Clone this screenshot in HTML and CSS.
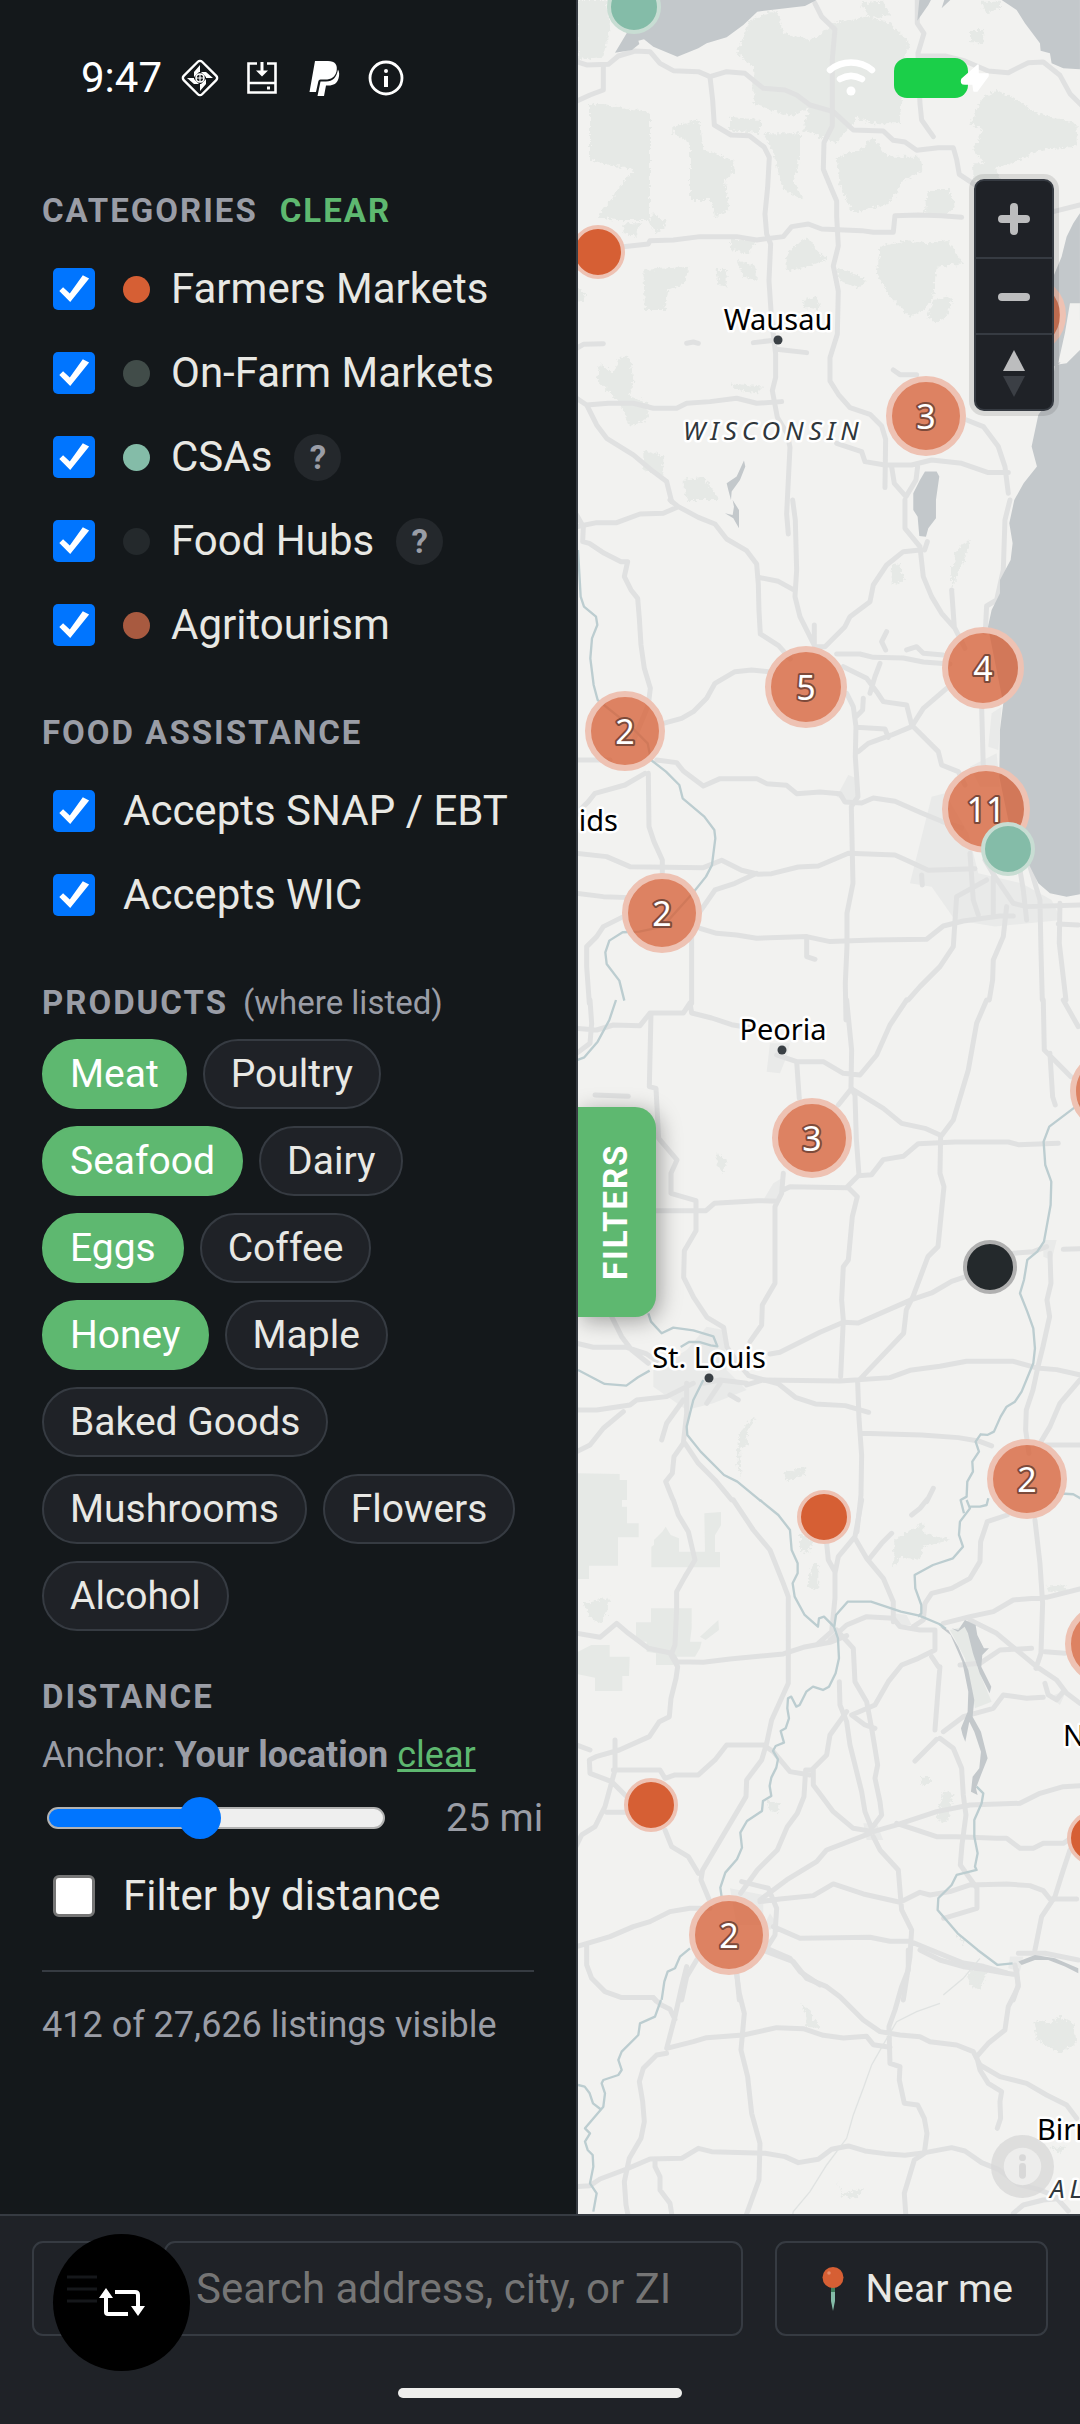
FILE: index.html
```html
<!DOCTYPE html>
<html lang="en">
<head>
    <meta charset="UTF-8">
    <meta name="viewport" content="width=device-width, initial-scale=1.0">
    <title>Farm Map</title>
    <link rel="stylesheet" href="styles.css">
</head>
<body>
    <div class="status-bar">
        <div class="status-left">
            <span class="clock">9:47</span>
            <svg class="status-icon" viewBox="0 0 40 40">
                <rect x="7" y="7" width="26" height="26" rx="3" transform="rotate(45 20 20)" fill="none" stroke="#fff" stroke-width="2.4"/>
                <path d="M20 7v7h-6zM20 33v-7h6zM7 20h7v6zM33 20h-7v-6zM14 14h5l-5 5zM26 14v5l-5-5zM26 26h-5l5-5zM14 26v-5l5 5z" fill="#fff"/>
                <circle cx="20" cy="20" r="4" fill="none" stroke="#fff" stroke-width="1.6"/>
                <path d="M20 16v8M16 20h8" stroke="#fff" stroke-width="1.2"/>
            </svg>
            <svg class="status-icon" viewBox="0 0 40 40">
                <path d="M15 5.500H6.500V34.500H33.500V5.500H25M6.500 25H33.500" fill="none" stroke="#fff" stroke-width="2.6"/>
                <path d="M20 4v10" stroke="#fff" stroke-width="3"/>
                <path d="M14 12.500h12l-6 6z" fill="#fff"/>
                <rect x="25" y="28.500" width="3" height="3" fill="#fff"/>
            </svg>
            <svg class="status-icon" viewBox="0 0 40 40">
                <path d="M11 3h13c7 0 10 4 8.500 10.500C31 19 27.500 21.500 21 21.500h-4.500c-1.500 0-2 1-2.300 2.500L12 34H5.500z" fill="#fff"/>
                <path d="M34 11.500c1.500 2.500 1.500 5.500.5 9-1.500 5-5 7-10 7h-2.500L20 38h-6.500l3-14.500h5.500c7 0 10.500-4 12-12z" fill="#fff"/>
            </svg>
            <svg class="status-icon" viewBox="0 0 40 40">
                <circle cx="20" cy="20" r="16" fill="none" stroke="#fff" stroke-width="2.800"/>
                <circle cx="20" cy="13" r="2" fill="#fff"/>
                <path d="M20 18v11" stroke="#fff" stroke-width="4"/>
            </svg>
        </div>
        <div class="status-right">
            <svg class="wifi" viewBox="0 0 50 38" fill="none" stroke="#fff" stroke-linecap="round">
                <path d="M4 11c12-10 30-10 42 0" stroke-width="6.500"/>
                <path d="M14 20c7-4 15-4 22 0" stroke-width="6.500"/>
                <circle cx="25" cy="32" r="4.500" fill="#fff" stroke="none"/>
            </svg>
            <svg class="battery" viewBox="0 0 96 40">
                <rect width="74" height="40" rx="13" fill="#1bcf49"/>
                <path d="M84 7L68 21q-2 5 3 5h8l1 7h3L94 18v-2H84z" fill="#fff" stroke="#fff" stroke-width="1.500" stroke-linejoin="round"/>
            </svg>
        </div>
    </div>

    <main class="content">
        <aside class="panel">
            <section class="panel-section">
                <h2>Categories <button type="button" class="clear-btn">Clear</button></h2>
                <label class="check-row"><input type="checkbox" checked><span class="swatch farmers"></span>Farmers Markets</label>
                <label class="check-row"><input type="checkbox" checked><span class="swatch onfarm"></span>On-Farm Markets</label>
                <div class="check-row">
                    <label class="check-row"><input type="checkbox" checked><span class="swatch csa"></span>CSAs</label>
                    <button type="button" class="help-btn">?</button>
                </div>
                <div class="check-row">
                    <label class="check-row"><input type="checkbox" checked><span class="swatch hub"></span>Food Hubs</label>
                    <button type="button" class="help-btn">?</button>
                </div>
                <label class="check-row"><input type="checkbox" checked><span class="swatch agri"></span>Agritourism</label>
            </section>

            <section class="panel-section">
                <h2>Food Assistance</h2>
                <label class="check-row"><input type="checkbox" checked>Accepts SNAP / EBT</label>
                <label class="check-row"><input type="checkbox" checked>Accepts WIC</label>
            </section>

            <section class="panel-section">
                <h2>Products <span class="hint">(where listed)</span></h2>
                <div class="chips">
                    <button type="button" class="chip active">Meat</button>
                    <button type="button" class="chip">Poultry</button>
                    <button type="button" class="chip active">Seafood</button>
                    <button type="button" class="chip">Dairy</button>
                    <button type="button" class="chip active">Eggs</button>
                    <button type="button" class="chip">Coffee</button>
                    <button type="button" class="chip active">Honey</button>
                    <button type="button" class="chip">Maple</button>
                    <button type="button" class="chip">Baked Goods</button>
                    <button type="button" class="chip">Mushrooms</button>
                    <button type="button" class="chip">Flowers</button>
                    <button type="button" class="chip">Alcohol</button>
                </div>
            </section>

            <section class="panel-section">
                <h2>Distance</h2>
                <p class="anchor">Anchor: <strong>Your location</strong> <a href="#">clear</a></p>
                <div class="range-row">
                    <input type="range" id="distance" min="5" max="50" value="25" aria-label="Distance">
                    <output for="distance">25 mi</output>
                </div>
                <label class="check-row"><input type="checkbox">Filter by distance</label>
            </section>

            <p class="count">412 of 27,626 listings visible</p>
        </aside>

        <div class="map">
            <svg class="map-canvas" viewBox="0 0 502 2214" preserveAspectRatio="xMinYMin slice">
                <defs>
                    <filter id="rough" x="-5%" y="-5%" width="110%" height="110%">
                        <feTurbulence type="fractalNoise" baseFrequency="0.09" numOctaves="3" seed="4"/>
                        <feDisplacementMap in="SourceGraphic" scale="22" xChannelSelector="R" yChannelSelector="G"/>
                    </filter>
                </defs>
                <rect width="502" height="2214" fill="#f2f2f0"/>

                <!-- northern tile -->
                <g transform="translate(-8 0) scale(.3333)">
                    <g class="wood" filter="url(#rough)">
                        <path d="M20 0h90l10 80-20 90-75 10zM540 60l80-30 20 70 90 20 60-50 100-20 70 20 60 60-20 50-10 190-90 0-40-20-60 80-100-40 20-70-60 30-110-40 0-110-50-40z"/>
                        <path d="M60 310l150 20 30 10 0 320-100 0-60-10 50-60 60-80-130-30 0-100zM310 380l80-20 10 90 90 30 0 40-25 20 10 90-40 20-10-50-65 0 0-170-50-30zM580 400l110 0 0 80-20 60 30 60-60-30-30-110zM480 350l90 10 0 40-90-10zM250 640l40 30-30 30-25-30z"/>
                        <path d="M800 470l70-20 40-40 40 60 100 0 10 40-60 30-40 70-110 30-40-80zM1070 570l70 0 15 50-30 30-60-10zM1240 290l40-20 60 30 60 40 120 30 0 70-110 10-60 30-90 30-50-60 30-60-40-20zM1200 90h40v40h-40zM870 10l70-5 20 40-60 10zM1230 5h60v20l-40 15z"/>
                        <path d="M220 810l135-10-10 50-50 20-10 60-60 0zM650 760l60-50 30 40 30 30-60 20-60 10zM800 800l90 40-20 25-60-20zM930 740l80-20 60 10 60-10 50 70-80 10-10 90-30 40-40 20-60-60-40-70 10-60zM480 720l80 0-20 40-60-10zM500 780l60 20v40l-40-10zM440 810h30v50l-25-5zM700 900l40-10 10 40-50-10zM1090 900l60-10-20 60-30 20-30-20z"/>
                        <path d="M90 1090l40 30 20-50 30 0 10 70-10 50 60 20-10 50-50 20-30-70-70-70zM480 1150l100 10-20 20-60-10zM220 1350l60 20 0 60-60-20zM340 1440l60-10 50 70-100 0zM160 670l50 0-10 40-40-10zM1210 490l60 0 20 50-80 0zM20 860l25 20-10 30-15-10z"/>
                    </g>
                    <g class="road">
                        <path d="M20 185l30 10 65-2 30-25 50-15 45 2 30 35 40 22 75 3 35 15 50-15 55 5 55 45 65 5 35 15 40 30 70 20 60 55 90 3 30 28 35 5 35 25 65-8 45 0 10 35 8 45 60 40 25 15"/>
                        <path d="M735 10l20 40 40 38-8 90 0 200-25 50-2 80 25 60 15 35 0 45 5 90-15 60 15 75-3 130-22 70 0 70 25 40 35 40 60 20 35 35 12 40-2 145"/>
                        <path d="M1042 0l0 70 20 30-18 60 6 150 5 50 35 50M1045 168l80 0 60 15 70 30 60 5 60-30 45-2 50 40 30 55 40 40"/>
                        <path d="M420 230l8 70 5 75 50 30 55 2 45 35 15 30-5 90-8 80 5 60 12 30-5 110 8 120 12 100 0 70-10 40 15 80 30 50 8 40-10 200 5 60"/>
                        <path d="M100 195l0 75-40 15-40 18M160 740l75-8 5-10 70-2 80-10 110 0 60 10 80-10 25-30 50-8 40 15 120 5 35 5 60 0 5-50 70-2 70 2 60 5M1450 635l80-20"/>
                        <path d="M20 1195l30 20 65-5 75 0 60 15 70 0 30-15 70-5 80-10 60 15 75-5M50 1215l30 60 30 40 80 50 60 50 40 30 15 60M800 1330l75 25 10 30 60 10 80 0 60-15 90 10 80 28 60 0M965 1400l8 50 35 40 30-50 5-40M1190 1260l50 20 45 60 20 60 10 80M20 1045l20-12 60-2M350 1030l20-4 15 4M550 1028l70-8M620 1048l90 10M970 1110l20 14 50 0"/>
                    </g>
                    <g class="water">
                        <path d="M150 0H740L705 18 562 35 520 75 470 112 410 130 385 145 322 170 250 140 222 118 205 122 208 132 186 150 135 158 170 100 140 40z"/>
                        <path d="M1295 0l45 30 25 40 45 60 2 22 28 8 5 30 35 15 50 3V0zM1048 0l-6 62 33-47 8-15zM1115 25l8-25h18z"/>
                        <path d="M1530 640l-20 30-20 40-15 60-25 60v270l20-10 20-60 25-70 15 0zM1530 1050l-40 40-35 5-15 100-35 50-20 95 16 60-40 50-28 50h200z"/>
                        <path d="M1065 1415h35l8 15-10 70h-68v-20l20-40zM522 1382l4 18-16 40-25 35-2 25-8-30-5-20 30-20z"/>
                    </g>
                    <path d="M1500 910l30 0v100l-35 70-30 8 20-90z" fill="#f2f2f0"/>
                </g>

                <!-- lake shore and Chicago -->
                <g transform="translate(-8 500) scale(.3333)">
                    <path class="urban" d="M1085 890l40-10 70 120 30 120 130 30 90 50 30 60-200 20-120-20-70-100-65-10zM800 890l35-65 25 10 0 70-30-5zM1265 640l30-20-10 130-30-10zM1200 800l80-40 10 100-60 0z"/>
                    <path class="wood" filter="url(#rough)" d="M965 200l20-10 20 50-40 15zM1180 130l20-10-10 40-30 70-10 0 5-70zM1140 200l20 0-10 70z"/>
                    <g class="road">
                        <path d="M20 80l60-12 60 0 70-26 70-2 45-20 60 32 50 20 35 45 60 35 30 40 5 60 2 80 4 70 55 35 35 40M300 0l25 20"/>
                        <path d="M20 45l20 35-2 45 20 5 45 30 50 25 20 0-10 45 20 40 20 25 5 60 5 80 10 70 18 60-6 50-50 120M280 670l55-15 35-20 40-40 25-45 60-35 50-5 50 5"/>
                        <path d="M668 0l8 60 4 150-5 80 15 60 45 90 30 0 60-60 15-30 60-45 10-50 40-60 50-40 50-5M565 232l60 12 45 25M733 375l0 60M1072 125l-8 25M1005 0l0 85 45 55 10 90 25 60 30 50 40 45 30 60M1145 270l8 110M1320 0l-15 60-5 150-20 90-30 18-4 80"/>
                        <path d="M800 462l70 0 40 10 90 2 60 12 80 6M820 500l70 35 30 40 20 30 70 10 15 60 80 80 10 40 50 20 20 40M1130 565l-70 60-35 55-60 25-70 25-30 25M830 580l20 40 8 60-2 90 8 120-20 30 5 230-18 90 0 100-5 110 2 110M860 682l85 5 10 25M880 595l-2 35-20 20M930 490l-15 40-15 50M950 395l-15 30 12 25M1010 450l30-10 20 20 60 5"/>
                        <path d="M20 780h100M260 780l60 8 20 25 60 45 50-22 110 0 30 15 60 5 30 25 70-5 60 5 15 25 50 3 35-15 65 10 80 35 60 25 60 20M235 820l2 160 15 45 25 55 0 50M225 820l-60 35-90 25-20 25-20 20"/>
                        <path d="M20 1060l90 10 70 30 220 3 55-22 60 30 50 12 40-2 80-20 60-3 90-38 140 5 40 18 60 28 140-5M20 1180l80 10 80 3M390 1235l45-65 60-20 65-30M390 1285l50 15 60 5 60 10 150-5 70 15 130-5 160-2 50-40 60-15 110-15 40 0M160 1250l-60 30-20 30-30 30 0 60 8 110M365 1310v200M710 1310l0 60 25 8M1055 1125l2 30"/>
                        <path d="M1235 620l5 180M1200 1060l10 140 15 45M1245 1080l30 50 55 80 40 10 160-5M1270 1130v110M1310 1220l-10 90-30 70-2 60-10 60M1350 1110l10 60 10 90M1380 1100l30 100 3 150 4 150M1470 1210l-2 120 20 170M1250 1140l-90 50-10 150-40 60-60 60-35 40M1465 1272l60 3"/>
                    </g>
                    <path class="river" d="M24 150l8 140 10 30 36 30 4 25-16 40-5 60 10 80 12 45 100 80 50 50 10 50 45 35 40 40 10 40 65 55 30 40 3 25-10 80-18 35-40 50-90 100-70 15-50 2-40 25-12 35 4 35 38 50 15 60"/>
                    <path class="water" d="M1333 0l-15 70 10 60-6 50-32 60v40l-25 50-11 50 46 230-10 80-2 140 52 250 35 10 30 60 35 30 50 10 40-7V0zM1030 0h68v55l-23 30-7 25-20-2-5-58-13-20zM488 0l19 30v55l-17-30-25-15 23 5 4-25z"/>
                </g>

                <!-- Peoria to St. Louis -->
                <g transform="translate(-8 1000) scale(.3333)">
                    <path class="urban" d="M600 130l60 0-10 40-20 50-40-5zM610 550l25-15-5 70-50-5zM250 1110l100-60 60-70 50 10 10 120 60 60-100 40-80 20-100-70zM1420 720l40 0-15 60-25-10z"/>
                    <path class="wood" filter="url(#rough)" d="M440 460l30 20-10 40-20-20zM540 1260l20-5-30 40 5 40-25 10 5 90-15-50 10-90zM640 1420l70-20-10 25-50 20z"/>
                    <path class="wood" d="M24 1420l125 2 0 18 22 0 0 60H24z"/>
                    <g class="road">
                        <path d="M60 0l5 70-5 60-40 30M20 85l60 5 50-15 80 2 30-38 100 0 20-30 5 30 60 15 60 20 60 10M243 40l-5 220 20 5 8 150 55 65-18 40 0 60 75 22 0 90-35 60-2 80 30 60 40 60 50 30 10 60 35 50 30 35 90 25 50 40 60 20 90 5 70 20"/>
                        <path d="M620 165l60 20 80 0 60 35 50 5 50-60 40-90 50-75M830 0l15 150-2 115 12 20 4 130 8 110-35 35 30 30-15 60-12 130-15 20-5 100 5 60-8 170M845 265l-40 50M850 270l90 55 55 45 70 15 45 20M680 185l8 110M640 520l-5 60-20 40 0 230-38 65-2 60-35 50M640 570l20-10 170 3M865 527l40-3 35-45 60-10 45-38 110-5 160 0 30 8 120-4M258 632h150l25-22 130-8 60 2"/>
                        <path d="M1250 0l-30 70-25 140-45 150-38 50-2 110 12 40-18 180-30 30-45 120-20 40-8 70-138 145 4 110 8 110-2 120-12 110M530 1155l50-15 230 3 150-10 60-22 90-12 80-15 140 0 70 20 60 5 90 20M600 1062l30-5 120-60 70-30 45 2 160-70 60-20 60-35 60-20M875 1300l180 5 110 8 60 10 40 15M1330 760l60-5 40-15M1480 748l60-2M1440 760l3 90-12 50 8 50-20 90-15 60-15 70-20 60-2 60 10 70"/>
                        <path d="M1420 0l3 150 80 80M1440 160l8 130 8 25M1480 0l45 80M1530 1140l-60 70-30 70-30 50M1410 1335h120M75 285l100 4"/>
                        <path d="M20 1030l50 12 100 0 60 20 30 20M125 950l30 60 30 40 50 40M20 1230l60 0 100-15 20-15 90-10 80-40M20 1355l40-20 40-50 60-50M340 1200l-50 70-15 50M350 1150l0 90-10 90-28 40-5 50-20 25 20 50M345 1330l40 60 50 50 50 60M400 1150l50-10 80 10M480 1185l25 15M410 1210l40-60M1090 1465l-20 40"/>
                    </g>
                    <g class="river">
                        <path d="M138 0l-20 60-35 65-40 47-20 8M235 940l8 25 32 35 35-17 60 8 60 18 12 30-20-3-35-10-30 0-25 15M24 1110l80 42 65 5 35-25 35-20M400 1140l-30 60-20 80 2 25 40 50 70 70 40 20 70 58"/>
                        <path d="M1530 310l-92 70-17 45 5 70 18 50-2 70-20 110-20 30-30 25-10 60-12 40 22 55 18 50 5 60-5 45-35 85-20 30-25 15-18 30-20 45-20 10-20-2-15 22 10 30-20 30 2 30-17 30-2 45-18 10 10 40M1460 1480l50 3 30 17"/>
                    </g>
                </g>

                <!-- Ozarks and Memphis -->
                <g transform="translate(-8 1500) scale(.3333)">
                    <path class="wood" d="M24 0h132v20h15v50h35v42h-62v85H57v40H24zM403 40l50-4v40l-18 30v50h15v46H244v-62l8-5v-15l25-25 10-15 15 25 25 10v40h78zM243 325h122v60l-5 40h35l-5 20-15 25h-64v25h-53v-35l-28-5v-30h-32v-58h45zM24 455l40-20h55v35h60l-2 58h-20v45H75v-40l-51-10zM390 410l55-50 2 30-40 30zM1140 390l60-15 25 70-10 40 50 120-50 20-30-150z"/>
                    <path class="wood" filter="url(#rough)" d="M40 310l80-20-10 50-20 30-30-20zM690 100l40 20-15 40-25-10zM730 190l15 10 0 70-35-10zM970 120l90-50 0 30 80 20-80 20-10 40-60-10-20 40zM590 900l40 10-10 30-25-10zM1120 870l30 15-20 85-30-10zM1190 1420l60-10-20 60-30-15zM1430 260l60-5-5 20-50 0zM1050 830l30 0 0 25-25 0zM1160 1300l25 20-5 15z"/>
                    <path class="urban" d="M480 1165l100 20v90h-80zM600 1240l20 30-20 20-15-20zM880 970l40 0 20 50-50 0zM970 340l40 5 15 30-50 0zM1440 590l50-20-20 45zM1320 1370l40 0-10 45-35-10z"/>
                    <g class="road">
                        <path d="M310 0l15 45 30 50 20 85-30 50-25 45 0 50-5 110-12 30 20 35-5 35-15 60-5 55-30 15-30 45-90 40-70 20-20 10 2 40 65 25 50 50M20 400l70 12 50-42 35 30 60 45 70 15 15 25 80 2 80-10 160-15 60-20 80-15 50-20M20 735l40 15M135 720l0 90-30 110-30 60-40 25-20 40M110 937h60M130 810h140l15 25 30-10 70 0 50-45 35-45 110 0 30 20 50 60 60 10"/>
                        <path d="M490 0l60 90 50 60 40 100 15 40 0 260-50 110-15 70-15 50-45 60-2 50-130 220-5 30 25 60M285 990l20 50 50 30 30 50M770 130l5 50 20 35 0 80-10 100-40 35M875 0l-20 110-50 60-10 50M855 115l35 60 50 60 30 70 0 60M1070 0l-20 25-25 20M965 100l-30 30-40 50M800 390l50 55 5 100 35 60 15 80 10 60 8 50-8 40 15 70 5 40-30 40-20-50-10-60-20-80-15-60-10-70-20-50-2-70"/>
                        <path d="M780 420l50-45 60-25 80 5 20 25 60 10 45 0 0 60-50 25-50 20-40 50-40 70-70 30 40 30 30 10M830 635l-50 70-10 60-45 45-18 0-5 80-20 50-30 40-30 70-60 60-50 70M730 810l0 45 60 80 60 50 60 10 70-20 120-40 100-20 150-5 60-30 70-20 90-5M980 970l120 40 60 0 120 5 30 0 40 30 40 0 30-15 60 0 30-20M1500 1050l-20 60-25 80-40 60-20 100M900 1000l-130 50-30 35-90 55-80 60"/>
                        <path d="M910 1010l20 40 55 60 10 120 30 60-5 80-20 130M570 1205l60-8 100-10 60-35 90 30 110 25 60-30 30 8 60-10 60-20 110-3 70 5 40 15 20 25 80 0M610 1280l80 35 210-3 60 12 60 0 60 25 100 40 60 10 70 20M515 1145l80 20 25 60-5 80-25 40 70 30 30 40 60 40M1030 380l30-20 5-50 20-30 60-15 55-30 30-50 2-60 20-60 60-20M1395 60l15 130 8 120-5 150-15 45M1120 370l80-20 70-15 60-35 100-8 100-25M1200 360l80 40 60 50 60 50 60 40 30 40 40 30M1170 495l60-5 60-40 95-5M1425 455l60 5M1110 500l-5 60-10 130M1085 470l20 30M1120 695l60-45 90-25 30-40 70 10 50-3M1110 715l40 30 25 60 5 80 8 60-12 90-5 60 50 70 0 60-100 30M1100 718l-65 65M1425 550l10 35 25 15 20-25"/>
                        <path d="M20 1340l100-30 70-30 50-15 60-30 60-10 60 0M50 1335l0 60 15 40 40 40 50 18 95 0 8 10M380 1380l-30 50-15 70M500 1420l8 80M1335 1395l10 60-15 45M1345 1360l80 0 100 20"/>
                    </g>
                    <g class="river">
                        <path d="M570 0l55 45 35 45 5 60 18 40 0 30-15 30 6 40 30 55 40 35 3-25 15-5 30 30 12 35 3 60-10 45-20 40-18 10-30-10-20 15-20 40-10 5-15-30-10 5-2 30 5 30-10 30-15 8 10 35-25 10-8 15 15 25-5 25-15 30-5 25 5 30-25 15-3 30-45 30-20 35 5 45-15 35-35 40-15 45 5 35M360 1345l-30 25-15 35-22 10-10 30-8 55"/>
                        <path d="M793 380l5-35 35-40 70 0 90 30 55 12 60 25 20 15M1190 0l10 25-30 40-3 40 12 35-30 35-60 20-55 30 2 40 18 50 0 25-10 10M1200 20l30 0 20-5 5-20"/>
                        <path d="M1220 860l20 20-5 30-22 50 0 50 10 50-8 40 5 10-60 15-15 30-40 40-2 35 60 70 60 50 60 45 45-5"/>
                    </g>
                    <path class="water" d="M1110 380l25 10 30 50 30 70 18 90-5 50 25 45 20 80-20 50-15 40 5 20-20-10 5-45 20-25 5-50-20-60-15-30-12 60-8-20-5-20 20-50 2-60-18-90-35-80zM1145 385l20 5 20-30 32 15 5 30 20 40 15 0-20 20-3 35 30 60-5 20-30-60-20-60-15-60-10-20-20 15zM1345 1385l50-20 60 10 70 30v15l-40-20-50-20-40 0-40 15z"/>
                </g>

                <!-- Mississippi and Alabama -->
                <g transform="translate(-8 1950) scale(.3333)">
                    <path class="wood" filter="url(#rough)" d="M690 160l30 20 10 30 25 25-50-5 5-30zM1390 210l50 10 30-20 40 20 10 60-50 30-70-40zM800 690l20 40 60-15-20 30-40-5zM1440 590l50 0-20 20zM1200 60l50 0-20 50z"/>
                    <g class="road">
                        <path d="M250 143l20 20 30 15 15 30 M350 50l-15 60-20 90-25 95 80-20 40-12 110-8 100-22 80 3 60 20 60 8 70-5 20 25 50 8M290 310l-30 5-40 40-12 40 10 60 5 60-10 50-35 60-15 70 5 70 10 50-20 40M20 710l40-3 30-20 80-30 70-30 95-2 50-30 40 10 160 5 60 10 40 18 60-10 40-30 50-10 50 15 60 8 60 5 60-8 80-15 40 10 50 35 50 20 60 45 60 15 50 20 40 45"/>
                        <path d="M500 70l8 60 15 60-10 110 20 80 12 110 25 90-3 110-40 110M590 5l80 30 40 50 60 25 40 30 70 70 50 35 60 10 60 5 30 15 80 10 50 20 20 40 60 35 80 20 60 35 60 30 30 40M1015 0l0 60-20 50-20 70-18 50 3 110 30 10-2 40 15 70 40 5 20 40 8 45-8 60-30 20-30 100 5 70M1340 60l5 50-30 60-10 70-50 40-35 40 10 40 25 40 40 25-5 30 2 50-10 30M1050 0l60 30 70 20 60 8 60 10 30 5M255 630l0 20 15 30 0 40 30 40 5 30M1330 790l30-25 60-15 60-5"/>
                    </g>
                    <path d="M1230 25l-50 60-60 50M1110 160l-70 25-60 30-35 60-40 70-25 70-30 80-20 70-60 80-50 80-50 60-10 50" fill="none" stroke="#e0e3e2" stroke-width="4"/>
                    <path class="river" d="M273 150l-18 50-45 20-5 35-50 50-10 25 10 30-10 15-45 15-5 10 10 30-5 40-55 65 15 15-15 25 8 25 15 15 2 35-10 50 20 30-10 55M24 405l20 5 15 20 10 30 22 17"/>
                </g>

                <g class="city">
                    <text x="200" y="330" text-anchor="middle">Wausau</text>
                    <circle cx="200" cy="340" r="4.500"/>
                    <text x="40" y="831" text-anchor="end">Rapids</text>
                    <text x="205" y="1040" text-anchor="middle">Peoria</text>
                    <circle cx="204" cy="1050" r="4.500"/>
                    <text x="131" y="1368" text-anchor="middle">St. Louis</text>
                    <circle cx="131" cy="1378" r="4.500"/>
                    <text x="485" y="1746">Nashville</text>
                    <text x="459" y="2140">Birmingham</text>
                </g>
                <g class="state">
                    <text x="105" y="440">WISCONSIN</text>
                    <text x="472" y="2198">ALABAMA</text>
                </g>

                <g class="pin">
                    <circle class="csa" cx="56" cy="7" r="25"/>
                    <circle class="farmers" cx="20" cy="252" r="25"/>
                    <circle class="hub" cx="412" cy="1267" r="25"/>
                    <circle class="farmers" cx="246" cy="1517" r="25"/>
                    <circle class="farmers" cx="73" cy="1805" r="25"/>
                    <circle class="farmers" cx="516" cy="1838" r="25"/>
                </g>
                <g class="cluster">
                    <circle cx="448" cy="315" r="37"/>
                    <circle cx="348" cy="416" r="37"/>
                    <circle cx="405" cy="668" r="38"/>
                    <circle cx="228" cy="687" r="38"/>
                    <circle cx="47" cy="731" r="37"/>
                    <circle cx="408" cy="809" r="41"/>
                    <circle cx="84" cy="913" r="37"/>
                    <circle cx="234" cy="1138" r="37"/>
                    <circle cx="532" cy="1091" r="37"/>
                    <circle cx="449" cy="1479" r="37"/>
                    <circle cx="527" cy="1644" r="37"/>
                    <circle cx="151" cy="1935" r="37"/>
                    <text x="348" y="429">3</text>
                    <text x="405" y="681">4</text>
                    <text x="228" y="700">5</text>
                    <text x="47" y="744">2</text>
                    <text x="408" y="822">11</text>
                    <text x="84" y="926">2</text>
                    <text x="234" y="1151">3</text>
                    <text x="449" y="1492">2</text>
                    <text x="151" y="1948">2</text>
                </g>
                <g class="pin">
                    <circle class="csa" cx="430" cy="849" r="25"/>
                </g>
            </svg>

            <div class="map-controls">
                <button type="button" aria-label="Zoom in">
                    <svg viewBox="0 0 76 76"><path d="M38 26v24M26 38h24" stroke="#bcbdbe" stroke-width="8" stroke-linecap="round"/></svg>
                </button>
                <button type="button" aria-label="Zoom out">
                    <svg viewBox="0 0 76 76"><path d="M26 38h24" stroke="#bcbdbe" stroke-width="8" stroke-linecap="round"/></svg>
                </button>
                <button type="button" aria-label="Reset north">
                    <svg viewBox="0 0 76 76"><path d="M38 15l11 21H27z" fill="#bcbdbe"/><path d="M38 62l11-21H27z" fill="#3b3f45"/></svg>
                </button>
            </div>

            <button type="button" class="attrib-btn" aria-label="Attribution">
                <svg viewBox="0 0 64 64"><circle cx="32" cy="32" r="19" fill="#ededec"/><circle cx="32" cy="23" r="3.500" fill="#d8d8d8"/><path d="M32 32v9" stroke="#d8d8d8" stroke-width="7" stroke-linecap="round"/></svg>
            </button>
        </div>
    </main>

    <button type="button" class="filters-tab">Filters</button>

    <footer class="bottom-bar">
        <div class="bar-row">
            <button type="button" class="menu-btn" aria-label="Menu">
                <svg viewBox="0 0 30 30"><path d="M0 3h30M0 15h30M0 27h30" stroke="#e8e8e4" stroke-width="3"/></svg>
            </button>
            <input type="text" class="search" aria-label="Search" placeholder="Search address, city, or ZI">
            <button type="button" class="near-btn">
                <svg class="pin-icon" viewBox="0 0 22 44">
                    <path d="M9 20h4v14l-2 10-2-10z" fill="#84bca8"/>
                    <path d="M9 20h4v5H9z" fill="#3f7f5c"/>
                    <circle cx="11" cy="10.500" r="10.500" fill="#d65f34"/>
                    <circle cx="7" cy="6" r="1.800" fill="#e58a68"/>
                </svg>
                Near me
            </button>
        </div>
        <div class="home-indicator"></div>
    </footer>

    <button type="button" class="float-btn" aria-label="Rotate">
        <svg class="float-menu" viewBox="0 0 30 30"><path d="M0 3h30M0 15h30M0 27h30" stroke="#15171a" stroke-width="3"/></svg>
        <svg class="float-icon" viewBox="0 0 46 30">
            <path d="M7 8v16q0 2 2 2h20M16 4h20q3 0 3 3v14" fill="none" stroke="#fff" stroke-width="4"/>
            <path d="M7 0l7 10H0zM39 28l7-10H32z" fill="#fff"/>
        </svg>
    </button>
</body>
</html>
```

FILE: styles.css
```css
:root {
    --panel-width: 578px;
    --bg: #14181b;
    --surface: #1f2227;
    --border: #363b42;
    --text: #e8e8e4;
    --muted: #9a9da6;
    --green: #5eb870;
    --blue: #0075ff;
}
* {
    box-sizing: border-box;
}
body {
    margin: 0;
    position: relative;
    display: flex;
    flex-direction: column;
    min-height: 100vh;
    overflow-x: hidden;
    background: var(--bg);
    color: var(--text);
    font-family: Roboto, sans-serif;
    font-size: 42px;
}
button,
input {
    font-family: inherit;
    color: inherit;
}
button {
    padding: 0;
    border: none;
    background: none;
    cursor: pointer;
}
svg {
    display: block;
}
h2,
p {
    margin: 0;
}

/* status bar */
.status-bar {
    position: absolute;
    top: 0;
    left: 0;
    right: 0;
    z-index: 3;
    display: flex;
    justify-content: space-between;
    align-items: center;
    height: 156px;
    padding: 0 90px 0 81px;
    color: #fff;
}
.status-left,
.status-right {
    display: flex;
    align-items: center;
}
.status-left {
    gap: 22px;
}
.status-right {
    gap: 18px;
}
.clock {
    margin-right: -4px;
    line-height: 50px;
}
.status-icon {
    width: 40px;
    height: 40px;
}
.wifi {
    width: 50px;
    height: 38px;
}
.battery {
    width: 96px;
    height: 40px;
}

/* layout */
.content {
    flex: 1;
    display: flex;
}
.panel {
    flex: none;
    width: var(--panel-width);
    padding: 190px 42px 42px;
    border-right: 2px solid var(--border);
}
.panel-section {
    margin-bottom: 45px;
}
.panel-section:nth-of-type(4) {
    margin-bottom: 32px;
}
.panel h2 {
    display: flex;
    align-items: center;
    gap: 22px;
    height: 40px;
    margin-bottom: 17px;
    font-size: 33px;
    font-weight: 700;
    letter-spacing: 2px;
    text-transform: uppercase;
    color: var(--muted);
}
.clear-btn {
    font-size: inherit;
    font-weight: inherit;
    letter-spacing: inherit;
    text-transform: inherit;
    color: var(--green);
}
.panel .hint {
    margin-left: -7px;
    font-size: 33px;
    font-weight: 400;
    letter-spacing: 0;
    text-transform: none;
}

.check-row {
    display: flex;
    align-items: center;
    height: 84px;
    line-height: 46px;
    white-space: nowrap;
}
.check-row input {
    appearance: none;
    flex: none;
    width: 42px;
    height: 42px;
    margin: 0 28px 0 11px;
    border: 3px solid #767676;
    border-radius: 6px;
    background: #fff;
}
.check-row input:checked {
    border: none;
    border-radius: 5px;
    background: var(--blue);
}
.check-row input:checked::before {
    content: "";
    display: block;
    width: 42px;
    height: 42px;
    background: #fff;
    clip-path: polygon(15% 55%, 24% 46%, 40% 61%, 71% 17%, 86% 25%, 41% 81%);
}
.swatch {
    width: 27px;
    height: 27px;
    margin-right: 21px;
    border-radius: 50%;
}
.swatch.farmers { background: #d65f34; }
.swatch.onfarm { background: #414c49; }
.swatch.csa { background: #84bca8; }
.swatch.hub { background: #24292c; }
.swatch.agri { background: #a85a40; }
.help-btn {
    width: 47px;
    height: 47px;
    margin-left: 22px;
    border-radius: 50%;
    background: #24282c;
    color: var(--muted);
    font-size: 33px;
    font-weight: 700;
}

.chips {
    display: flex;
    flex-wrap: wrap;
    gap: 17px 16px;
}
.chip {
    height: 70px;
    padding: 0 26px;
    border: 2px solid var(--border);
    border-radius: 35px;
    background: var(--surface);
    font-size: 39px;
}
.chip.active {
    border-color: var(--green);
    background: var(--green);
    color: #fff;
}

.anchor,
.count {
    font-size: 36px;
    line-height: 44px;
    color: var(--muted);
    white-space: nowrap;
}
.anchor a {
    color: var(--green);
}
.range-row {
    display: flex;
    align-items: center;
    gap: 61px;
    height: 42px;
    margin: 20px 0 15px 5px;
}
.range-row input {
    appearance: none;
    flex: none;
    width: 338px;
    height: 22px;
    margin: 0;
    border: 2px solid #b2b2b2;
    border-radius: 11px;
    background: linear-gradient(to right, var(--blue) 45%, #efefef 45%) border-box;
}
.range-row input::-webkit-slider-thumb {
    appearance: none;
    width: 42px;
    height: 42px;
    border-radius: 50%;
    background: var(--blue);
}
.range-row output {
    font-size: 39px;
    color: var(--muted);
    white-space: nowrap;
}
.count {
    padding-top: 31px;
    border-top: 2px solid var(--border);
}

/* map */
.map {
    position: relative;
    flex: 1;
    overflow: hidden;
    background: #f2f2f0;
}
.map-canvas {
    position: absolute;
    inset: 0;
    width: 100%;
    height: 100%;
}
.map-canvas .water { fill: #c3c8cb; }
.map-canvas .wood { fill: #e6e9e6; }
.map-canvas .urban { fill: #e9eae9; }
.map-canvas .road {
    fill: none;
    stroke: #e0e1e1;
    stroke-width: 15;
    stroke-linejoin: round;
    stroke-linecap: round;
}
.map-canvas .river {
    fill: none;
    stroke: #bccdd0;
    stroke-width: 7;
    stroke-linejoin: round;
}
.map-canvas text {
    font-family: "Noto Sans", sans-serif;
    paint-order: stroke;
    stroke-linejoin: round;
}
.city text {
    font-size: 29px;
    fill: #000;
    stroke: #fff;
    stroke-width: 5px;
}
.city circle {
    fill: #3a4045;
}
.state text {
    font-size: 26px;
    font-style: italic;
    letter-spacing: 5px;
    fill: #30373c;
    stroke: #fff;
    stroke-width: 5px;
}
.pin circle {
    stroke-width: 4px;
}
.pin .farmers { fill: #d65f34; stroke: #eec2b3; }
.pin .csa { fill: #84bca8; stroke: #c8ddd3; }
.pin .hub { fill: #24292c; stroke: #b0b0b0; }
.cluster circle {
    fill: #d65f34;
    fill-opacity: .76;
    stroke: #eec2b3;
    stroke-width: 6px;
}
.cluster text {
    font-size: 34px;
    text-anchor: middle;
    fill: #fff;
    stroke: #7d4a3a;
    stroke-width: 4px;
}

.map-controls {
    position: absolute;
    top: 179px;
    right: 26px;
    width: 80px;
    border: 2px solid var(--border);
    border-radius: 10px;
    background: var(--surface);
    box-shadow: 0 0 0 5px rgba(0, 0, 0, 0.1);
}
.map-controls button {
    display: block;
    width: 76px;
    height: 76px;
}
.map-controls button + button {
    border-top: 2px solid var(--border);
}
.attrib-btn {
    position: absolute;
    right: 26px;
    bottom: 16px;
    width: 63px;
    height: 63px;
    border-radius: 50%;
    background: rgba(216, 216, 216, 0.8);
}

.filters-tab {
    position: absolute;
    top: 50%;
    left: var(--panel-width);
    width: 78px;
    height: 210px;
    padding-left: 4px;
    border-radius: 21px 0 0 21px;
    background: var(--green);
    box-shadow: -4px -4px 21px rgba(0, 0, 0, 0.35);
    color: #fff;
    font-size: 33px;
    font-weight: 700;
    letter-spacing: 2px;
    text-transform: uppercase;
    writing-mode: vertical-rl;
    transform: translateY(-50%) rotate(180deg);
    clip-path: inset(-40px 0 -40px -40px);
}

/* bottom bar */
.bottom-bar {
    display: flex;
    flex-direction: column;
    align-items: center;
    height: 210px;
    padding: 25px 32px 0;
    border-top: 2px solid var(--border);
    background: var(--surface);
}
.bar-row {
    display: flex;
    gap: 32px;
    width: 100%;
    height: 95px;
}
.menu-btn,
.search,
.near-btn {
    border: 2px solid var(--border);
    border-radius: 11px;
}
.menu-btn {
    flex: none;
    width: 100px;
    padding-left: 33px;
}
.menu-btn svg {
    width: 30px;
}
.search {
    flex: 1;
    min-width: 0;
    padding: 0 30px;
    background: none;
    font-size: 42px;
}
.search::placeholder {
    color: #757575;
}
.near-btn {
    flex: none;
    display: flex;
    align-items: center;
    gap: 22px;
    padding: 0 33px 0 45px;
    font-size: 39px;
    white-space: nowrap;
}
.pin-icon {
    width: 22px;
    height: 44px;
}
.home-indicator {
    width: 284px;
    height: 10px;
    margin-top: 52px;
    border-radius: 5px;
    background: #eeeeec;
}
.float-btn {
    position: absolute;
    left: 53px;
    bottom: 53px;
    width: 137px;
    height: 137px;
    border-radius: 50%;
    background: #000;
}
.float-icon {
    width: 46px;
    height: 30px;
    margin: 0 auto;
}
.float-menu {
    position: absolute;
    left: 14px;
    top: 40px;
    width: 30px;
}
```
